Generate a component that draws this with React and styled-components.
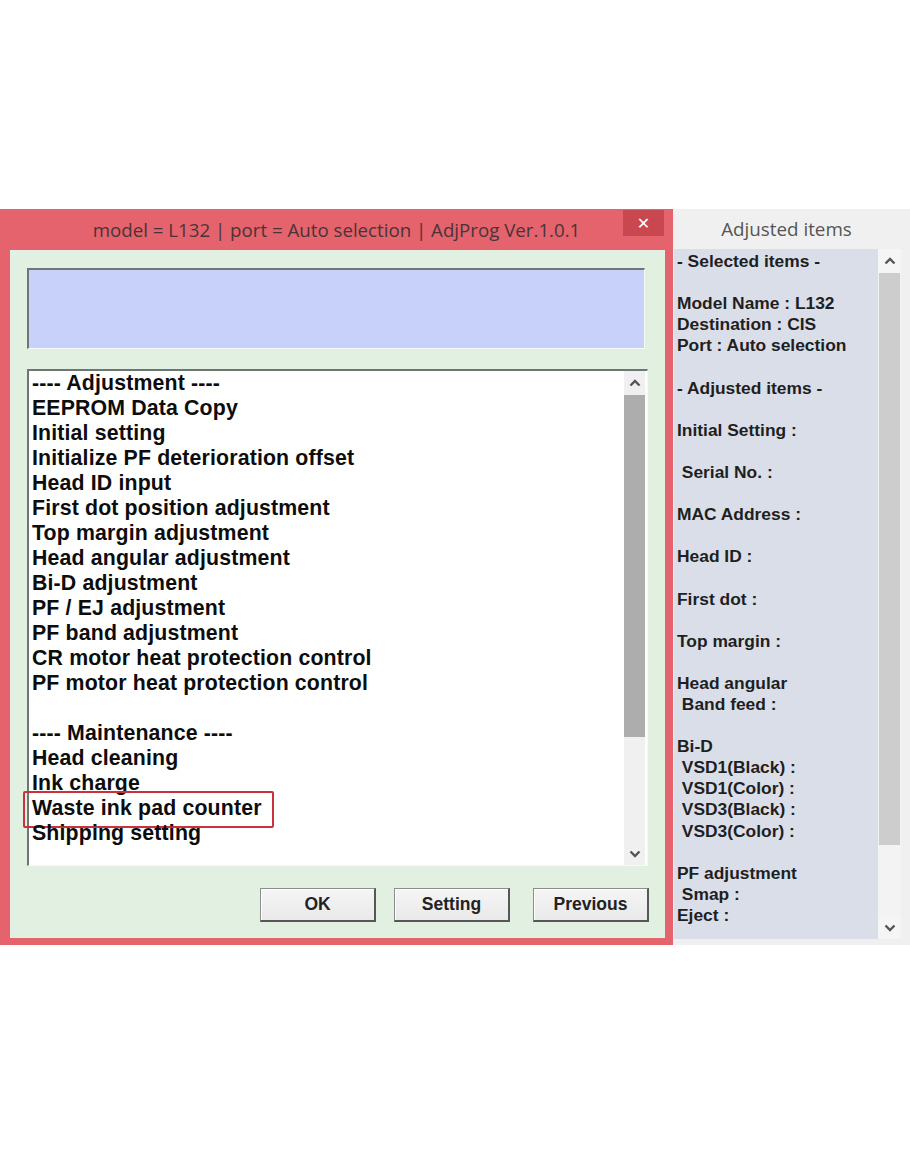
import React from 'react';
import styled, { createGlobalStyle } from 'styled-components';

const Global = createGlobalStyle`
  html, body { margin: 0; padding: 0; background: #ffffff; }
  body { font-family: "Liberation Sans", Arial, sans-serif; }
`;

const Page = styled.div`
  width: 910px;
  height: 1155px;
  padding-top: 209px;
  box-sizing: border-box;
  display: flex;
  align-items: flex-start;
`;

const Window = styled.div`
  width: 673px;
  height: 736px;
  background: #e4636d;
  display: flex;
  flex-direction: column;
  box-sizing: border-box;
  padding: 0 8px 7px 10px;
`;

const TitleBar = styled.div`
  height: 41px;
  margin: 0 -8px 0 -10px;
  display: grid;
  grid-template-columns: 1fr auto 1fr;
  align-items: center;
`;

const TitleText = styled.div`
  grid-column: 2;
  font-family: "Open Sans", "Noto Sans", sans-serif;
  font-size: 18.7px;
  color: #4b3437;
  white-space: nowrap;
`;

const CloseButton = styled.div`
  grid-column: 3;
  justify-self: end;
  align-self: start;
  margin: 1px 9px 0 0;
  width: 41px;
  height: 26px;
  background: #c9474f;
  color: #ffffff;
  display: flex;
  align-items: center;
  justify-content: center;
  font-family: "DejaVu Sans", sans-serif;
  font-size: 16px;
  font-weight: bold;
`;

const Content = styled.div`
  flex: 1;
  background: #e2f0e2;
  padding: 18px 16px 0 17px;
  display: flex;
  flex-direction: column;
`;

const Sunken = styled.div`
  box-sizing: border-box;
  border-top: 2px solid #6e7675;
  border-left: 2px solid #6e7675;
  border-right: 1px solid #f6faf6;
  border-bottom: 1px solid #f6faf6;
`;

const InfoBox = styled(Sunken)`
  width: 618px;
  height: 81px;
  background: #c8d1fa;
`;

const ListBox = styled(Sunken)`
  margin-top: 20px;
  width: 621px;
  height: 497px;
  background: #ffffff;
  display: flex;
  padding-right: 2px;
`;

const ListItems = styled.div`
  flex: 1;
  padding-left: 3px;
  font-weight: bold;
  font-size: 21.3px;
  letter-spacing: 0.15px;
  line-height: 25px;
  color: #0d0d0d;
`;

const Item = styled.div`
  position: relative;
  height: 25px;
  white-space: pre;
  &::after {
    content: '';
    display: ${p => (p.$marked ? 'block' : 'none')};
    position: absolute;
    left: -9px;
    top: -5px;
    width: 251px;
    height: 37px;
    box-sizing: border-box;
    border: 2px solid #c9323c;
    border-radius: 2px;
  }
`;

const ScrollBar = styled.div`
  width: ${p => p.$w}px;
  display: flex;
  flex-direction: column;
  background: ${p => p.$track};
`;

const ArrowBox = styled.div`
  height: ${p => p.$h}px;
  display: flex;
  align-items: center;
  justify-content: center;
  background: ${p => p.$bg};
`;

const Thumb = styled.div`
  height: ${p => p.$h}px;
  background: ${p => p.$color};
  margin: 0 ${p => p.$inset}px;
`;

const Spacer = styled.div`
  flex: 1;
`;

const ButtonRow = styled.div`
  margin-top: 22px;
  width: 622px;
  display: flex;
  justify-content: flex-end;
`;

const Button = styled.div`
  width: 116px;
  height: 34px;
  margin-left: ${p => p.$ml || 0}px;
  box-sizing: border-box;
  background: linear-gradient(#f5f5f5, #e9e9e9);
  border: 1px solid #8d8d8d;
  border-right: 2px solid #575757;
  border-bottom: 2px solid #575757;
  box-shadow: inset 1px 1px #ffffff;
  display: flex;
  align-items: center;
  justify-content: center;
  font-weight: bold;
  font-size: 17.5px;
  color: #222;
`;

const Panel = styled.div`
  width: 237px;
  height: 736px;
  background: #f0f0f0;
  display: flex;
  flex-direction: column;
`;

const PanelHeader = styled.div`
  height: 40px;
  display: flex;
  align-items: center;
  justify-content: center;
  font-family: "Open Sans", "Noto Sans", sans-serif;
  font-size: 18.8px;
  color: #555555;
  padding-right: 10px;
`;

const PanelBody = styled.div`
  flex: 1;
  margin: 0 9px 6px 1px;
  display: flex;
  background: #dadee8;
`;

const PanelText = styled.div`
  flex: 1;
  padding: 2px 0 0 3px;
  font-weight: bold;
  font-size: 17.4px;
  line-height: 21.1px;
  color: #1f1f1f;
`;

const PanelLine = styled.div`
  height: 21.1px;
  white-space: pre;
`;

const Chevron = ({ down }) => (
  <svg width="12" height="8" viewBox="0 0 12 8">
    <polyline
      points={down ? '1.5,1.5 6,6 10.5,1.5' : '1.5,6.5 6,2 10.5,6.5'}
      fill="none"
      stroke="#555"
      strokeWidth="2.4"
    />
  </svg>
);

const listItems = [
  '---- Adjustment ----',
  'EEPROM Data Copy',
  'Initial setting',
  'Initialize PF deterioration offset',
  'Head ID input',
  'First dot position adjustment',
  'Top margin adjustment',
  'Head angular adjustment',
  'Bi-D adjustment',
  'PF / EJ adjustment',
  'PF band adjustment',
  'CR motor heat protection control',
  'PF motor heat protection control',
  '',
  '---- Maintenance ----',
  'Head cleaning',
  'Ink charge',
  'Waste ink pad counter',
  'Shipping setting',
];

const panelLines = [
  '- Selected items -',
  '',
  'Model Name : L132',
  'Destination : CIS',
  'Port : Auto selection',
  '',
  '- Adjusted items -',
  '',
  'Initial Setting :',
  '',
  ' Serial No. :',
  '',
  'MAC Address :',
  '',
  'Head ID :',
  '',
  'First dot :',
  '',
  'Top margin :',
  '',
  'Head angular',
  ' Band feed :',
  '',
  'Bi-D',
  ' VSD1(Black) :',
  ' VSD1(Color) :',
  ' VSD3(Black) :',
  ' VSD3(Color) :',
  '',
  'PF adjustment',
  ' Smap :',
  'Eject :',
];

export default function App() {
  return (
    <>
      <Global />
      <Page>
        <Window>
          <TitleBar>
            <TitleText>model = L132 | port = Auto selection | AdjProg Ver.1.0.1</TitleText>
            <CloseButton>✕</CloseButton>
          </TitleBar>
          <Content>
            <InfoBox />
            <ListBox>
              <ListItems>
                {listItems.map((t, i) => (
                  <Item key={i} $marked={t === 'Waste ink pad counter'}>{t}</Item>
                ))}
              </ListItems>
              <ScrollBar $w={21} $track="#f0f0f0">
                <ArrowBox $h={24} $bg="#f0f0f0"><Chevron /></ArrowBox>
                <Thumb $h={342} $color="#adadad" $inset={0} />
                <Spacer />
                <ArrowBox $h={22} $bg="#f0f0f0"><Chevron down /></ArrowBox>
              </ScrollBar>
            </ListBox>
            <ButtonRow>
              <Button>OK</Button>
              <Button $ml={18}>Setting</Button>
              <Button $ml={23}>Previous</Button>
            </ButtonRow>
          </Content>
        </Window>
        <Panel>
          <PanelHeader>Adjusted items</PanelHeader>
          <PanelBody>
            <PanelText>
              {panelLines.map((t, i) => (
                <PanelLine key={i}>{t}</PanelLine>
              ))}
            </PanelText>
            <ScrollBar $w={23} $track="#f3f3f3">
              <ArrowBox $h={24} $bg="#f5f5f5"><Chevron /></ArrowBox>
              <Thumb $h={572} $color="#cdcdcd" $inset={1} />
              <Spacer />
              <ArrowBox $h={22} $bg="#f5f5f5"><Chevron down /></ArrowBox>
            </ScrollBar>
          </PanelBody>
        </Panel>
      </Page>
    </>
  );
}
